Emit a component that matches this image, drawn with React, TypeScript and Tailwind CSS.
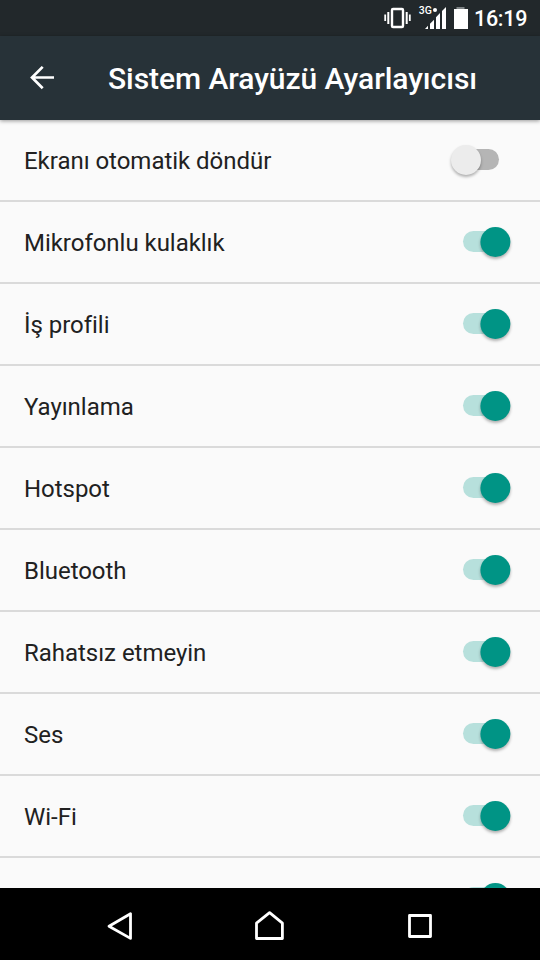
import React from 'react';
import clsx from 'clsx';

interface Setting {
	id: string;
	label?: string;
	enabled: boolean;
}

const settings: Setting[] = [
	{ id: 'rotate', label: 'Ekranı otomatik döndür', enabled: false },
	{ id: 'headset', label: 'Mikrofonlu kulaklık', enabled: true },
	{ id: 'work', label: 'İş profili', enabled: true },
	{ id: 'cast', label: 'Yayınlama', enabled: true },
	{ id: 'hotspot', label: 'Hotspot', enabled: true },
	{ id: 'bluetooth', label: 'Bluetooth', enabled: true },
	{ id: 'dnd', label: 'Rahatsız etmeyin', enabled: true },
	{ id: 'volume', label: 'Ses', enabled: true },
	{ id: 'wifi', label: 'Wi-Fi', enabled: true },
	{ id: 'next', enabled: true },
];

const StatusBar = () => {
	return (
		<div className="h-9 shrink-0 bg-[#22282b] flex items-center justify-end pr-3 text-white">
			<svg className="w-[90px] h-9" viewBox="380 0 90 36" fill="none">
				{/* vibrate */}
				<rect x="392" y="9" width="11" height="18" rx="1" stroke="#fff" strokeWidth="2.4" />
				<path d="M388.3 12v12M406.7 12v12" stroke="#fff" strokeWidth="2" />
				<path d="M385.2 14.5v6.5M409.8 14.5v6.5" stroke="#fff" strokeWidth="1.8" />
				{/* signal */}
				<text
					x="418.8"
					y="13.8"
					fill="#fff"
					className="font-['Roboto'] text-[10.5px] font-medium"
				>
					3G
				</text>
				<circle cx="435" cy="10" r="2" fill="#fff" />
				<path
					d="M425 29l3-3.2v3.2zM430 29v-5.2l4-4.1v9.3zM436 29V17.2l4-4.1V29zM442 29V11l4-4V29z"
					fill="#fff"
				/>
				{/* battery */}
				<path d="M456.5 7h8v2.5h-8z" fill="#7f8486" />
				<path d="M454 9h14v20h-14z" fill="#fff" />
			</svg>
			<span className="ml-1 mt-0.5 w-[54px] whitespace-nowrap text-[21.5px] leading-[34px] font-medium tracking-[-0.3px]">
				16:19
			</span>
		</div>
	);
};

const Toolbar = () => {
	return (
		<header className="relative z-10 h-[84px] shrink-0 bg-[#273238] flex items-center text-white shadow-[0_1px_4px_rgba(0,0,0,0.4)]">
			<button className="ml-[30px] w-6 h-6" aria-label="Geri">
				<svg className="w-6 h-6" viewBox="0 0 24 24" fill="none">
					<path d="M24 11.5H2M12.7 .9L2 11.5l10.7 10.7" stroke="#fff" strokeWidth="2.7" />
				</svg>
			</button>
			<h1 className="ml-[54px] mt-0.5 whitespace-nowrap text-[30px] font-medium leading-[82px] tracking-[-0.06px]">
				Sistem Arayüzü Ayarlayıcısı
			</h1>
		</header>
	);
};

const Toggle = ({ enabled }: { enabled: boolean }) => {
	return (
		<div
			role="switch"
			aria-checked={enabled}
			className={clsx(
				'relative mb-px w-9 h-[21px] rounded-full',
				enabled ? 'bg-[#b7e0dc]' : 'bg-[#b5b5b5]'
			)}
		>
			<span
				className={clsx(
					'absolute -top-1 w-[30px] h-[30px] rounded-full shadow-[0_2px_3px_rgba(0,0,0,0.3)]',
					enabled ? 'left-[17px] translate-x-[0.4px] bg-[#009485]' : '-left-3 bg-[#ececec]'
				)}
			/>
		</div>
	);
};

const SettingRow = ({ label, enabled }: Omit<Setting, 'id'>) => {
	return (
		<li className="h-[82px] shrink-0 pl-6 pr-[41px] flex items-center justify-between border-b-2 border-[#dadada]">
			<span className="mt-0.5 text-2xl leading-8 tracking-[-0.03px] text-[#212121]">{label}</span>
			<Toggle enabled={enabled} />
		</li>
	);
};

const NavBar = () => {
	return (
		<nav className="h-[72px] shrink-0 bg-black flex items-center justify-center gap-[114px]">
			<svg className="w-9 h-9" viewBox="102 906 36 36" fill="none" stroke="#fff" strokeWidth="2.8">
				<path d="M130.5 913.8v24.6L109 926.2z" strokeLinejoin="round" />
			</svg>
			<svg className="w-9 h-9" viewBox="252 906 36 36" fill="none" stroke="#fff" strokeWidth="2.8">
				<path d="M256.5 938.5v-15.3l13.1-10.6 12.8 10.6v15.3z" strokeLinejoin="round" />
			</svg>
			<svg className="w-9 h-9" viewBox="402 906 36 36" fill="none" stroke="#fff" strokeWidth="2.8">
				<path d="M409.5 915.5h21v21h-21z" strokeLinejoin="round" />
			</svg>
		</nav>
	);
};

const App = () => {
	return (
		<div className="w-[540px] h-[960px] overflow-hidden flex flex-col bg-[#fafafa] font-['Roboto',sans-serif]">
			<StatusBar />
			<Toolbar />
			<ul className="flex-1 min-h-0 overflow-hidden flex flex-col">
				{settings.map(({ id, label, enabled }) => (
					<SettingRow key={id} label={label} enabled={enabled} />
				))}
			</ul>
			<NavBar />
		</div>
	);
};

export default App;
